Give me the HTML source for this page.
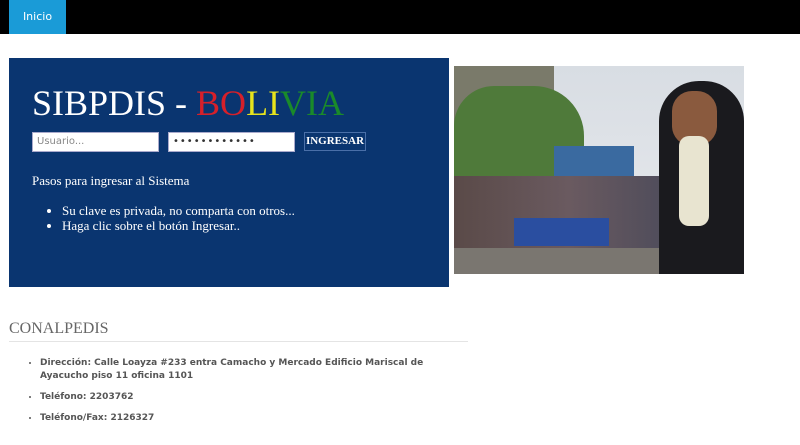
<!DOCTYPE html>
<html><head><meta charset="utf-8"><style>
*{margin:0;padding:0;box-sizing:border-box}
body{width:800px;height:445px;background:#fff;position:relative;overflow:hidden;font-family:"Liberation Serif",serif}
.nav{position:absolute;left:0;top:0;width:800px;height:34px;background:#000}
.tab{position:absolute;left:9px;top:0;width:57px;height:34px;background:#1a9bd7;color:#fff;font:11px "DejaVu Sans",sans-serif;text-align:center;line-height:34px}
.panel{position:absolute;left:9px;top:58px;width:440px;height:229px;background:#0a3570}
.title{position:absolute;left:23px;top:24px;font-size:36px;color:#fff;white-space:nowrap}
.in{position:absolute;top:74px;height:20px;background:#fff;border:1px solid #aac;font:10px "DejaVu Sans",sans-serif;color:#888;padding:3px 4px}
.btn{position:absolute;left:295px;top:74px;width:62px;height:19px;border:1px solid #4a6fa8;color:#fff;font:bold 11px "Liberation Serif",serif;text-align:center;line-height:17px}
.pasos{position:absolute;left:23px;top:115px;color:#fff;font-size:13px}
ul.b{position:absolute;left:53px;top:145px;color:#fff;font-size:13px;line-height:15px}
.photo{position:absolute;left:454px;top:66px;width:290px;height:208px;overflow:hidden;background:linear-gradient(#d8dde3,#e8eaee)}
h2{position:absolute;left:9px;top:320px;font-weight:normal;font-size:16px;color:#666}
.hr{position:absolute;left:9px;top:341px;width:459px;height:1px;background:#e4e4e4}
ul.c{position:absolute;left:40px;top:357px;width:420px;font:bold 9px "DejaVu Sans",sans-serif;color:#555;line-height:13px}
ul.c li{margin-bottom:8px}
</style></head><body>
<div class="nav"><div class="tab">Inicio</div></div>
<div class="panel">
<div class="title">SIBPDIS - <span style="color:#d6202a">BO</span><span style="color:#e7e41c">LI</span><span style="color:#1a8a2a">VIA</span></div>
<div class="in" style="left:23px;width:127px">Usuario...</div>
<div class="in" style="left:159px;width:127px;color:#333;letter-spacing:1px">••••••••••••</div>
<div class="btn">INGRESAR</div>
<div class="pasos">Pasos para ingresar al Sistema</div>
<ul class="b"><li>Su clave es privada, no comparta con otros...</li><li>Haga clic sobre el botón Ingresar..</li></ul>
</div>
<div class="photo">
<div style="position:absolute;left:0;top:0;width:100px;height:110px;background:#7a7a6a"></div>
<div style="position:absolute;left:0;top:20px;width:130px;height:95px;background:#4f7a3a;border-radius:40px 50px 0 0"></div>
<div style="position:absolute;left:100px;top:80px;width:80px;height:40px;background:#3a6aa0"></div>
<div style="position:absolute;left:0;top:110px;width:230px;height:75px;background:linear-gradient(90deg,#5a4a48,#6a5a60,#4a4a5a)"></div>
<div style="position:absolute;left:60px;top:152px;width:95px;height:28px;background:#2a4ea0"></div>
<div style="position:absolute;left:0;top:182px;width:290px;height:26px;background:#7a7670"></div>
<div style="position:absolute;left:205px;top:15px;width:85px;height:193px;background:#1a1a1e;border-radius:40px 40px 0 0"></div>
<div style="position:absolute;left:218px;top:25px;width:45px;height:55px;background:#8a5a3e;border-radius:20px"></div>
<div style="position:absolute;left:225px;top:70px;width:30px;height:90px;background:#e8e4d0;border-radius:10px"></div>
</div>
<h2>CONALPEDIS</h2>
<div class="hr"></div>
<ul class="c"><li>Dirección: Calle Loayza #233 entra Camacho y Mercado Edificio Mariscal de Ayacucho piso 11 oficina 1101</li><li>Teléfono: 2203762</li><li>Teléfono/Fax: 2126327</li></ul>
</body></html>
